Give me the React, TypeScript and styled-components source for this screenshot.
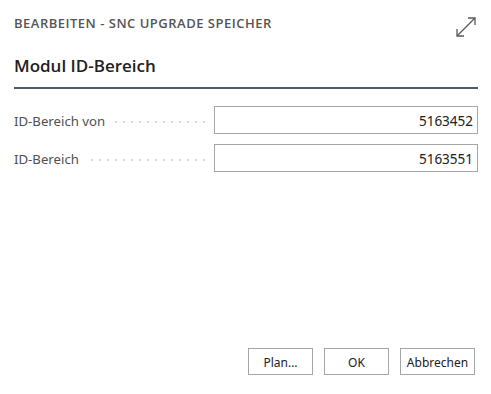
import React from "react";
import styled, { createGlobalStyle } from "styled-components";

const Global = createGlobalStyle`
  html, body { margin: 0; padding: 0; background: #ffffff; }
  body { font-family: "Noto Sans", "Open Sans", sans-serif; }
  * { box-sizing: border-box; }
`;

const Dialog = styled.div`
  width: 491px;
  height: 394px;
  display: flex;
  flex-direction: column;
  background: #ffffff;
`;

const Header = styled.div`
  display: flex;
  align-items: flex-start;
  justify-content: space-between;
  padding: 15px 14px 0 14px;
  height: 55px;
`;

const Caption = styled.div`
  font-family: "Open Sans", "Noto Sans", sans-serif;
  font-size: 13px;
  font-weight: 600;
  color: #555555;
  letter-spacing: 0.5px;
  line-height: 16px;
`;

const ExpandButton = styled.button`
  border: none;
  background: transparent;
  padding: 0;
  margin: 1px 0 0 0;
  width: 22px;
  height: 22px;
  display: flex;
  align-items: center;
  justify-content: center;
`;

const Section = styled.div`
  padding: 0 13px 0 14px;
`;

const SectionTitle = styled.h2`
  margin: 0;
  font-family: "Open Sans", "Noto Sans", sans-serif;
  font-size: 17px;
  font-weight: 600;
  color: #212121;
  line-height: 22px;
  padding-bottom: 10px;
  border-bottom: 2px solid #505a68;
`;

const Fields = styled.div`
  display: flex;
  flex-direction: column;
  gap: 10px;
  padding-top: 17px;
`;

const FieldRow = styled.div`
  display: grid;
  grid-template-columns: 200px 1fr;
  align-items: center;
`;

const LabelCell = styled.div`
  display: flex;
  align-items: center;
  gap: 8px;
`;

const Label = styled.span`
  font-size: 13.2px;
  color: #505050;
  white-space: nowrap;
  padding-top: 1px;
`;

const Leader = styled.span`
  flex: 1;
  height: 2px;
  margin-right: 6px;
  margin-top: 3px;
  background-image: radial-gradient(circle, #d6d6d6 1px, transparent 1.1px);
  background-size: 8px 2px;
  background-position: right center;
  background-repeat: repeat-x;
`;

const NumberInput = styled.input`
  height: 28px;
  width: 100%;
  border: 1px solid #a6a6a6;
  font-family: "Noto Sans", "Open Sans", sans-serif;
  font-size: 13.5px;
  color: #212121;
  text-align: right;
  padding: 1px 4px 0 6px;
  outline: none;
  background: #ffffff;
`;

const Spacer = styled.div`
  flex: 1;
`;

const Footer = styled.div`
  display: flex;
  justify-content: flex-end;
  gap: 11px;
  padding: 0 16px 19px 0;
`;

const Button = styled.button<{ $w: number }>`
  width: ${(p) => p.$w}px;
  height: 27px;
  border: 1px solid #a6a6a6;
  background: #ffffff;
  font-family: "Noto Sans", "Open Sans", sans-serif;
  font-size: 12px;
  color: #212121;
  padding: 1px 0 0 0;
`;

const ExpandIcon = () => (
  <svg width="22" height="22" viewBox="0 0 22 22" fill="none">
    <path d="M2 20 L20 2" stroke="#5a5a5a" strokeWidth="1.3" />
    <path d="M13 2 H20 V9" stroke="#5a5a5a" strokeWidth="1.3" />
    <path d="M2 13 V20 H9" stroke="#5a5a5a" strokeWidth="1.3" />
  </svg>
);

export default function App() {
  return (
    <>
      <Global />
      <Dialog>
        <Header>
          <Caption>BEARBEITEN - SNC UPGRADE SPEICHER</Caption>
          <ExpandButton aria-label="Erweitern">
            <ExpandIcon />
          </ExpandButton>
        </Header>
        <Section>
          <SectionTitle>Modul ID-Bereich</SectionTitle>
          <Fields>
            <FieldRow>
              <LabelCell>
                <Label>ID-Bereich von</Label>
                <Leader />
              </LabelCell>
              <NumberInput defaultValue="5163452" />
            </FieldRow>
            <FieldRow>
              <LabelCell>
                <Label>ID-Bereich</Label>
                <Leader />
              </LabelCell>
              <NumberInput defaultValue="5163551" />
            </FieldRow>
          </Fields>
        </Section>
        <Spacer />
        <Footer>
          <Button $w={65}>Plan...</Button>
          <Button $w={65}>OK</Button>
          <Button $w={75}>Abbrechen</Button>
        </Footer>
      </Dialog>
    </>
  );
}
